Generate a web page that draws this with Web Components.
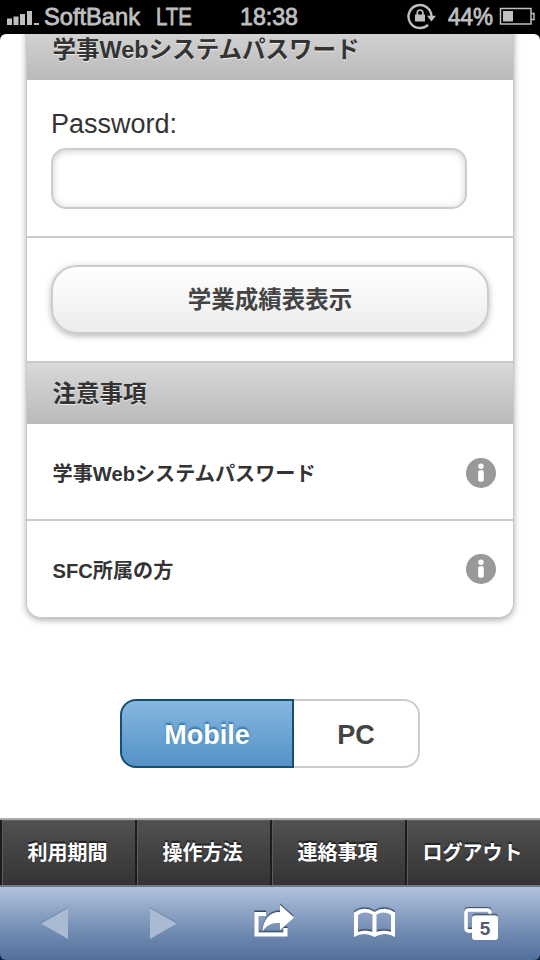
<!DOCTYPE html>
<html lang="ja"><head><meta charset="utf-8"><title>学業成績表</title>
<style>
html,body{margin:0;background:#000}
body{width:540px;height:960px;overflow:hidden;font-family:"Liberation Sans","Noto Sans CJK JP",sans-serif;color:#333}
</style></head><body>
<phone-screen></phone-screen>
<script>
const define=(name,html)=>customElements.define(name,class extends HTMLElement{
  constructor(){super();const t=document.createElement('template');t.innerHTML=html;this.attachShadow({mode:'open'}).append(t.content.cloneNode(true));}
});
define('status-bar',`<style>
:host{display:flex;height:34px;flex:none;background:#000;color:#bfbfbf;align-items:center;box-sizing:border-box}
svg{display:block;flex:none}
text{font:24px "Liberation Sans",sans-serif;fill:#bfbfbf;stroke:#bfbfbf;stroke-width:.8}
</style><svg width="540" height="34" viewBox="0 0 540 34">
<path fill="#bfbfbf" d="M7 18.500h5V25H7zM13.500 16.500h5V25h-5zM20 14h5v11h-5zM27 11h5v14h-5zM34 23h5v2h-5z"/>
<text x="44" y="25" textLength="96" lengthAdjust="spacingAndGlyphs">SoftBank</text><text x="156" y="25" textLength="36" lengthAdjust="spacingAndGlyphs">LTE</text>
<text x="240" y="25" textLength="58" lengthAdjust="spacingAndGlyphs">18:38</text><text x="448" y="25" textLength="45" lengthAdjust="spacingAndGlyphs">44%</text>
<path fill="none" stroke="#bfbfbf" stroke-width="2.400" d="M428 24.800A11.500 11.500 0 1 1 431.500 16"/><path fill="#bfbfbf" d="M427 15.800h9l-4.500 5.700zM415 14.500h10v7h-10z"/><path fill="none" stroke="#bfbfbf" stroke-width="1.700" d="M417.300 15v-2.200a2.800 2.800 0 0 1 5.600 0V15"/>
<path fill="none" stroke="#bfbfbf" stroke-width="1.500" d="M500.500 8.500H531v15.500h-30.500zM531 13.500h3v6h-3"/><path fill="#bfbfbf" d="M503 11h10v10.500h-10z"/></svg>`);
define('section-header',`<style>
:host{display:flex;align-items:center;height:63px;box-sizing:border-box;padding:0 26px 3px 25.500px;border-bottom:1px solid #bbb;border-top:2px solid #c9c9c9;background:linear-gradient(#d9d9d9,#bababa);font-weight:bold;font-size:23.500px;text-shadow:0 1px 0 #eee;white-space:nowrap}
</style><slot></slot>`);
define('password-field',`<style>
:host{display:block;height:156px;box-sizing:border-box;padding:29px 24px 0;font-size:27px;line-height:30px}
div{width:412px;height:57px;margin-top:9px;border:2px solid #ccc;border-radius:15px;box-shadow:inset 0 1px 7px #ccc}
</style><label><slot></slot></label><div></div>`);
define('action-button',`<style>
:host{display:block;height:125px;box-sizing:border-box;padding:27px 24px;border-top:2px solid #c9c9c9}
button{all:unset;display:block;box-sizing:border-box;width:438px;height:69px;border:2px solid #ccc;border-radius:26px;background:linear-gradient(#fff,#ececec);box-shadow:0 2px 6px #b5b5b5;text-align:center;line-height:67px;font-weight:bold;font-size:23.500px;color:#444}
</style><button><slot></slot></button>`);
define('info-row',`<style>
:host{display:flex;align-items:center;justify-content:space-between;height:97px;box-sizing:border-box;padding:2px 16px 0 25.500px;border-bottom:var(--line,2px solid #ccc);font-weight:bold;font-size:20.150px}
:host(:last-child){height:96px;padding-top:0}
</style><slot></slot><svg width="32" height="32"><circle cx="16" cy="16" r="15" fill="#999"/><circle cx="16" cy="9.300" r="2.700" fill="#fff"/><rect x="13.200" y="13.200" width="5.600" height="11.500" rx="1.800" fill="#fff"/></svg>`);
define('list-card',`<style>
:host{display:block;flex:none;width:486px;height:600px;margin:-17px auto 0;border:1px solid #c8c8c8;border-width:0 1px 1px;border-radius:0 0 15px 15px;box-shadow:0 2px 6px #aaa;overflow:hidden;background:#fff}
</style><slot></slot>`);
define('view-switch',`<style>
:host{display:flex;flex:none;width:300px;height:69px;margin:81px auto 0;font-weight:bold;font-size:27px;line-height:69px;text-align:center}
div{box-sizing:border-box;border:2px solid #ccc;line-height:69px}
.m{width:174px;border-color:#155070;border-radius:16px 0 0 16px;color:#fff;background:linear-gradient(#86b7e0,#5492c8);text-shadow:0 -2px 2px #3373a5}
.p{width:126px;border-left:0;border-radius:0 16px 16px 0;color:#444}
</style><div class="m"><slot name="mobile"></slot></div><div class="p"><slot name="pc"></slot></div>`);
define('page-view',`<style>
:host{display:flex;flex-direction:column;height:784px;overflow:hidden;background:#fff;border-radius:6px 6px 0 0}
</style><slot></slot>`);
define('menu-bar',`<style>
:host{display:grid;grid-template-columns:repeat(4,1fr);height:67px;flex:none;box-sizing:border-box;border-top:2px solid #aaa;background:#333}
</style><slot></slot>`);
define('menu-item',`<style>
:host{display:block;box-sizing:border-box;border-left:2px solid #1c1c1c;padding-right:2px;box-shadow:inset 1px 1px #5c5c5c;background:linear-gradient(#515151,#333);font-weight:bold;font-size:20px;line-height:66px;text-align:center;color:#fff;text-shadow:0 -2px 1px #222;white-space:nowrap}
</style><slot></slot>`);
define('browser-toolbar',`<style>
:host{display:block;height:75px;flex:none;background:#10213a}
div{height:75px;box-sizing:border-box;border-top:2px solid #6d7885;border-radius:0 0 6px 6px;background:linear-gradient(#b2c2dc,#91a7c8 30%,#6e88af 65%,#526f9b)}
svg{display:block;margin-top:-2px}
</style><div><svg width="540" height="75" viewBox="0 885 540 75">
<defs><filter id="s" x="-10%" y="-10%" width="120%" height="120%"><feDropShadow dx="0" dy="-1.500" stdDeviation=".3" flood-color="#344863"/></filter></defs>
<g fill="#a9bad2"><path d="M41 923.500 68 908v31z"/><path d="M177 923.500 150 908v31z"/></g><path stroke="#7089ac" d="M41 923 68 907.500M150 907.500l26 15" fill="none"/>
<g filter="url(#s)"><path fill="none" stroke="#fff" stroke-width="4" d="M266 914h-9.500v20.500h29V928"/><path fill="#fff" d="M280 905l14 12.500-14 12.500v-7c-8-.5-13 2-17.500 8 1-12 7.500-19 17.500-19z"/></g>
<path filter="url(#s)" fill="#fff" fill-rule="evenodd" d="M354 937v-24.500q10-7 20.500-.5 10.500-6.500 20.500.5V937q-10-6-20.500 0-10.500-6-20.500 0zM358 915v17q7-2.500 14.500 0v-17.500q-7.500-4-14.500.5zM376.500 914.500V932q7.500-2.500 14.500 0v-17q-7-4.500-14.500-.5z"/>
<path filter="url(#s)" fill="none" stroke="#fff" stroke-width="3.500" d="M473 931h-4q-3 0-3-3v-15q0-3 3-3h18q3 0 3 3v4"/><rect filter="url(#s)" x="472" y="915.500" width="26" height="24.500" rx="3" fill="#fff"/>
<text x="485" y="934.500" text-anchor="middle" font-family="Liberation Sans,sans-serif" font-size="19" font-weight="bold" fill="#4f5b70">5</text></svg></div>`);
define('phone-screen',`<style>:host{display:flex;flex-direction:column;height:960px;width:540px}</style>
<status-bar></status-bar><page-view><list-card><section-header>学事Webシステムパスワード</section-header><password-field>Password:</password-field><action-button>学業成績表表示</action-button><section-header>注意事項</section-header><info-row>学事Webシステムパスワード</info-row><info-row style="--line:0">SFC所属の方</info-row></list-card>
<view-switch><span slot="mobile">Mobile</span><span slot="pc">PC</span></view-switch></page-view>
<menu-bar><menu-item>利用期間</menu-item><menu-item>操作方法</menu-item><menu-item>連絡事項</menu-item><menu-item>ログアウト</menu-item></menu-bar><browser-toolbar></browser-toolbar>`);
</script></body></html>
